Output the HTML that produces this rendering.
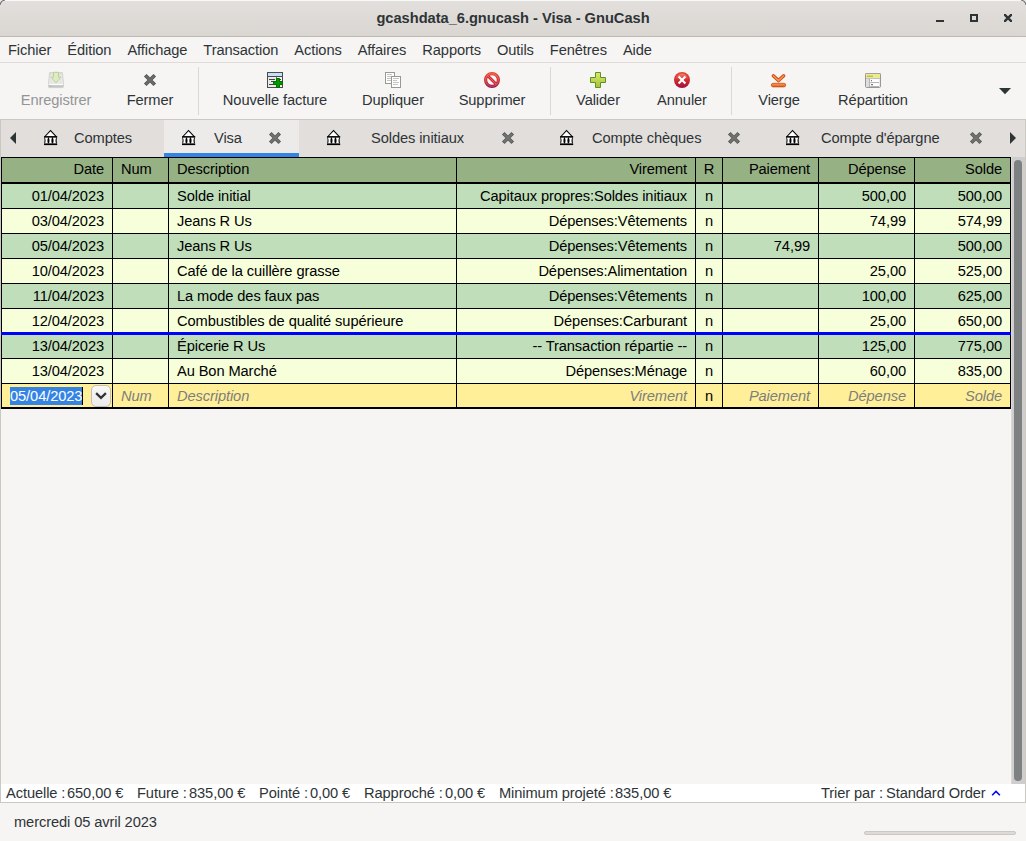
<!DOCTYPE html>
<html><head><meta charset="utf-8"><title>GnuCash</title>
<style>
html,body{margin:0;padding:0;}
body{width:1026px;height:841px;overflow:hidden;background:#f6f5f4;font-family:"Liberation Sans",sans-serif;font-size:14.667px;color:#2e3436;letter-spacing:-0.1px;position:relative;}
div,span{box-sizing:border-box;}
.abs{position:absolute;}
#title{position:absolute;left:0;top:0;width:1026px;height:37px;background:linear-gradient(to bottom,#e2dfdc 0,#dad6d2 100%);border-bottom:1px solid #bfb8b1;border-top:1px solid #f8f8f7;border-radius:6px 6px 0 0;}
#titletext{position:absolute;left:0;top:0;width:1026px;text-align:center;font-weight:bold;line-height:36px;letter-spacing:-0.03px;white-space:pre;}
#menu{position:absolute;left:0;top:37px;width:1026px;height:26px;border-bottom:1px solid #dedbd8;white-space:nowrap;}
#menu span{display:inline-block;padding:0 8px;line-height:27px;}
#toolbar{position:absolute;left:0;top:63px;width:1026px;height:56px;}
.tb{position:absolute;top:92px;transform:translateX(-50%);white-space:pre;line-height:16px;}
.sep{position:absolute;top:67px;width:1px;height:48px;background:#dbd8d5;}
.dis{color:#929595;}
#nb{position:absolute;left:0;top:119px;width:1026px;height:684px;border:1px solid #cdc7c2;background:#f6f5f4;}
#tabs{position:absolute;left:1px;top:120px;width:1024px;height:37px;background:#e1dedb;}
.tabl{position:absolute;top:130px;line-height:16px;white-space:pre;}
#acttab{position:absolute;left:164px;top:120px;width:135px;height:37px;background:#edebe9;box-shadow:inset 0 -4px #3584e4;}
#tbl{position:absolute;left:1px;top:157px;width:1010px;height:252px;background:#000;}
.rowbg{position:absolute;left:2px;width:1008px;}
.c{position:absolute;white-space:pre;overflow:hidden;color:#000;}
.c.ar{text-align:right;padding-right:8px;}
.c.al{padding-left:8px;}
.c.ac{text-align:center;}
.c.ph{color:#7c7e7c;font-style:italic;}
.c.hd{line-height:22px !important;}
.c.ph.ac{color:#000;font-style:normal;}
.vl{position:absolute;top:157px;width:1px;height:252px;background:#000;}
.hl{position:absolute;left:1px;width:1010px;height:1px;background:#000;}
#summary{position:absolute;left:1px;top:784px;width:1024px;height:18px;background:#fff;}
.sm{position:absolute;top:785px;line-height:16px;white-space:pre;}
#status{position:absolute;left:14px;top:814px;line-height:16px;white-space:pre;}
#prog{position:absolute;left:864px;top:831px;width:152px;height:4px;border:1px solid #cdc7c2;background:#dedad7;border-radius:3px;}
#trough{position:absolute;left:1011px;top:157px;width:14px;height:627px;background:#cfcecd;border-left:1px solid #dcdad7;}
#slider{position:absolute;left:1014px;top:160px;width:8px;height:621px;border-radius:4px;background:#7e8182;}
svg{position:absolute;overflow:visible;}
</style></head><body>
<div class="abs" style="left:0;top:0;width:1026px;height:8px;background:#e9e9e8"></div>
<div id="title"></div>
<svg style="left:0;top:0" width="1026" height="7" viewBox="0 0 1026 7"><path d="M0 5 Q0.800 0.800 5 0" fill="none" stroke="#6e6e6e" stroke-width="1.100"/><path d="M1026 5 Q1025.200 0.800 1021 0" fill="none" stroke="#6e6e6e" stroke-width="1.100"/></svg>
<div id="titletext">gcashdata_6.gnucash - Visa - GnuCash</div>
<svg style="left:930px;top:8px" width="90" height="22" viewBox="930 8 90 22">
 <rect x="936" y="20" width="8" height="2" fill="#2e3436"/>
 <rect x="971" y="15" width="6" height="6" fill="none" stroke="#2e3436" stroke-width="2"/>
 <clipPath id="cpx"><rect x="1004" y="14" width="8" height="8"/></clipPath><path clip-path="url(#cpx)" d="M1003 13 L1013 23 M1013 13 L1003 23" stroke="#2e3436" stroke-width="2.4" fill="none"/>
</svg>
<div id="menu"><span>Fichier</span><span>Édition</span><span>Affichage</span><span>Transaction</span><span>Actions</span><span>Affaires</span><span>Rapports</span><span>Outils</span><span>Fenêtres</span><span>Aide</span></div>
<div id="toolbar"></div>
<div class="tb dis" style="left:56px">Enregistrer</div>
<div class="tb" style="left:150px">Fermer</div>
<div class="sep" style="left:198px"></div>
<div class="tb" style="left:275px">Nouvelle facture</div>
<div class="tb" style="left:393px">Dupliquer</div>
<div class="tb" style="left:492px">Supprimer</div>
<div class="sep" style="left:550px"></div>
<div class="tb" style="left:598px">Valider</div>
<div class="tb" style="left:682px">Annuler</div>
<div class="sep" style="left:731px"></div>
<div class="tb" style="left:779px">Vierge</div>
<div class="tb" style="left:873px">Répartition</div>
<svg style="left:999px;top:88px" width="12" height="7" viewBox="0 0 12 7"><path d="M0 0 L12 0 L6 6.300 Z" fill="#2e3436"/></svg>
<svg style="left:0;top:63px" width="1026" height="56" viewBox="0 63 1026 56">
<defs>
<linearGradient id="gred" x1="0" y1="0" x2="0" y2="1"><stop offset="0" stop-color="#e8452a"/><stop offset="0.55" stop-color="#d02a2f"/><stop offset="1" stop-color="#9c0f45"/></linearGradient>
<linearGradient id="ggrn" x1="0" y1="0" x2="0" y2="1"><stop offset="0" stop-color="#dbe96a"/><stop offset="1" stop-color="#a3c23c"/></linearGradient>
<linearGradient id="gor" x1="0" y1="0" x2="0" y2="1"><stop offset="0" stop-color="#f4a45c"/><stop offset="1" stop-color="#e2571a"/></linearGradient>
<linearGradient id="ghl" x1="0" y1="0" x2="0" y2="1"><stop offset="0" stop-color="#fff" stop-opacity="0.350"/><stop offset="0.500" stop-color="#fff" stop-opacity="0"/></linearGradient>
</defs>
<!-- save (disabled) -->
<g opacity="0.92">
<path d="M49.600 72.500 L62.400 72.500 L63.500 83.500 L63.500 86.500 Q63.500 87.600 62.400 87.600 L49.600 87.600 Q48.500 87.600 48.500 86.500 L48.500 83.500 Z" fill="#e6e6e5" stroke="#d3d3d2" stroke-width="1"/>
<rect x="50.300" y="73.300" width="1.700" height="4.400" fill="#f4f4f4" stroke="#cfcfce" stroke-width="0.500"/>
<rect x="60" y="73.300" width="1.700" height="4.400" fill="#f4f4f4" stroke="#cfcfce" stroke-width="0.500"/>
<path d="M48.600 85.100 L63.400 85.100 L63.400 86.500 Q63.400 87.500 62.400 87.500 L49.600 87.500 Q48.600 87.500 48.600 86.500 Z" fill="#c3c3c2"/>
<rect x="49.500" y="85.600" width="2" height="0.900" fill="#a9a9a8"/>
<rect x="49" y="83.900" width="14" height="1.200" fill="#fcfcfc"/>
<path d="M53.500 72.300 L58.500 72.300 L58.500 77.200 L61 77.200 L56 82.800 L51 77.200 L53.500 77.200 Z" fill="#dfebc0" stroke="#b0d38e" stroke-width="1"/>
</g>
<!-- close -->
<path d="M145.250 75.250 L154.750 84.750 M154.750 75.250 L145.250 84.750" stroke="#555753" stroke-width="3.700" fill="none"/><path d="M145.900 75.900 L154.100 84.100 M154.100 75.900 L145.900 84.100" stroke="#6c6e6a" stroke-width="2" fill="none"/>
<!-- new invoice -->
<rect x="267.5" y="72.5" width="15" height="15" fill="#e9e9e7" stroke="#4b4b4b" stroke-width="1"/>
<rect x="268" y="73" width="14" height="3" fill="#c6dff6"/>
<rect x="268" y="76" width="14" height="1" fill="#4b4b4b"/>
<rect x="276" y="77" width="1" height="10" fill="#777"/>
<rect x="277" y="77" width="5" height="10" fill="#f4f4f3"/>
<rect x="269" y="79" width="6" height="1" fill="#444"/>
<rect x="271" y="81" width="4" height="1" fill="#444"/>
<rect x="269" y="84" width="6" height="1" fill="#444"/>
<rect x="279" y="79" width="2" height="1" fill="#444"/>
<path d="M276.5 78.5 L279.5 78.5 L279.5 81.5 L282.5 81.5 L282.5 84.5 L279.5 84.5 L279.5 87.5 L276.5 87.5 L276.5 84.5 L273.5 84.5 L273.5 81.5 L276.5 81.5 Z" fill="#009a00" stroke="#006c00" stroke-width="1"/>
<!-- duplicate -->
<rect x="385.5" y="72.5" width="9" height="11" fill="#fff" stroke="#979994" stroke-width="1"/>
<rect x="387" y="74" width="5" height="1" fill="#c4c5c2"/><rect x="387" y="76" width="5" height="1" fill="#c4c5c2"/><rect x="387" y="78" width="5" height="1" fill="#c4c5c2"/><rect x="387" y="80" width="5" height="1" fill="#c4c5c2"/>
<rect x="391.5" y="76.500" width="9" height="11" fill="#fff" stroke="#979994" stroke-width="1"/>
<rect x="393" y="78" width="6" height="1" fill="#c4c5c2"/><rect x="393" y="80" width="4" height="1" fill="#c4c5c2"/><rect x="393" y="82" width="6" height="1" fill="#c4c5c2"/><rect x="393" y="84" width="5" height="1" fill="#c4c5c2"/>
<!-- delete -->
<circle cx="492" cy="80" r="6.400" fill="#fdf6f5" stroke="url(#gred)" stroke-width="3.200"/>
<path d="M487.700 75.700 L496.300 84.300" stroke="#cf2a33" stroke-width="3"/>
<path d="M487.700 75.700 L496.300 84.300" stroke="#e4605d" stroke-width="1"/>
<circle cx="492" cy="80" r="6.400" fill="none" stroke="#ffffff" stroke-opacity="0.220" stroke-width="1.200"/>
<!-- validate plus -->
<path d="M595.5 72.500 L600.5 72.500 L600.5 77.500 L605.5 77.500 L605.5 82.500 L600.5 82.500 L600.5 87.500 L595.5 87.500 L595.5 82.500 L590.5 82.500 L590.5 77.500 L595.5 77.500 Z" fill="url(#ggrn)" stroke="#5d9220" stroke-width="1" stroke-linejoin="round"/>
<!-- cancel -->
<circle cx="682" cy="80" r="8" fill="url(#gred)"/>
<circle cx="682" cy="80" r="6.500" fill="url(#ghl)"/>
<path d="M678.600 76.600 L685.400 83.400 M685.400 76.600 L678.600 83.400" stroke="#fff" stroke-width="2.100"/>
<!-- go-bottom -->
<path d="M773.3 75.8 L778.5 80.600 L783.7 75.800" fill="none" stroke="#cf4a12" stroke-width="3.4" stroke-linecap="round" stroke-linejoin="round"/>
<path d="M773.3 75.800 L778.5 80.600 L783.7 75.800" fill="none" stroke="#f29550" stroke-width="1.5" stroke-linecap="round" stroke-linejoin="round"/>
<rect x="771.300" y="83.300" width="14.400" height="3.600" rx="1.8" fill="url(#gor)" stroke="#cf4a12" stroke-width="0.8"/>
<!-- split -->
<rect x="865.500" y="73.500" width="15" height="14" rx="1.200" fill="#ebebea" stroke="#989696" stroke-width="1"/>
<rect x="865.500" y="73" width="15" height="1" fill="#a3a1a1"/>
<rect x="866" y="74" width="14" height="4" fill="#ecec8a"/>
<rect x="867" y="75.600" width="6" height="1.400" fill="#bcbc66"/>
<rect x="866" y="78" width="14" height="0.800" fill="#b9b7b7"/>
<rect x="866" y="79" width="3.200" height="8" fill="#dddddc"/>
<rect x="869.200" y="79" width="0.800" height="8" fill="#aaa8a8"/>
<rect x="870.300" y="79.300" width="8.700" height="2.700" fill="#fff"/>
<rect x="870.300" y="82" width="8.700" height="0.800" fill="#a9a7a7"/>
<rect x="870.300" y="83.300" width="8.700" height="2.700" fill="#fff"/>
<rect x="870.300" y="86" width="8.700" height="0.800" fill="#a9a7a7"/>
<rect x="871" y="80.200" width="1" height="1" fill="#555"/><rect x="871" y="84.200" width="2" height="1" fill="#555"/>
</svg>
<div id="nb"></div>
<div id="tabs"></div>
<div id="acttab"></div>
<svg style="left:9px;top:132px" width="8" height="12" viewBox="0 0 8 12"><path d="M7 0 L7 12 L1 6 Z" fill="#2e3436"/></svg>
<svg style="left:1010px;top:132px" width="8" height="12" viewBox="0 0 8 12"><path d="M0 0 L0 12 L6 6 Z" fill="#2e3436"/></svg>
<div class="tabl" style="left:74px">Comptes</div>
<div class="tabl" style="left:214px">Visa</div>
<div class="tabl" style="left:371px">Soldes initiaux</div>
<div class="tabl" style="left:592px">Compte chèques</div>
<div class="tabl" style="left:821px">Compte d'épargne</div>
<svg style="left:0;top:120px" width="1026" height="37" viewBox="0 120 1026 37">
<g transform="translate(44,130)">
<path d="M6.500 -0.300 L13.300 6.900 L-0.100 6.900 Z" fill="#000"/>
<path d="M6.500 1.300 L11.200 6.250 L1.800 6.250 Z" fill="#fff"/>
<rect x="0" y="6.300" width="13.200" height="1.400" fill="#000"/>
<path d="M0.300 7.600 L12.900 7.600 Q12.300 10.500 12.900 13.600 L0.300 13.600 Q0.900 10.500 0.300 7.600 Z" fill="#000"/>
<path d="M0.900 7.700 L4.100 7.700 C3.200 8.700 3.200 12.500 4.100 13.500 L0.900 13.500 C1.800 12.500 1.800 8.700 0.900 7.700 Z" fill="#fff"/>
<path d="M4.850 7.700 L8.050 7.700 C7.150 8.700 7.150 12.500 8.050 13.500 L4.850 13.500 C5.750 12.500 5.750 8.700 4.850 7.700 Z" fill="#fff"/>
<path d="M8.900 7.700 L12.200 7.700 C11.300 8.700 11.300 12.500 12.200 13.500 L8.900 13.500 C9.800 12.500 9.800 8.700 8.900 7.700 Z" fill="#fff"/>
<rect x="0" y="13.500" width="13.200" height="1.600" fill="#000"/>
</g>
<g transform="translate(182,130)">
<path d="M6.500 -0.300 L13.300 6.900 L-0.100 6.900 Z" fill="#000"/>
<path d="M6.500 1.300 L11.200 6.250 L1.800 6.250 Z" fill="#fff"/>
<rect x="0" y="6.300" width="13.200" height="1.400" fill="#000"/>
<path d="M0.300 7.600 L12.900 7.600 Q12.300 10.500 12.900 13.600 L0.300 13.600 Q0.900 10.500 0.300 7.600 Z" fill="#000"/>
<path d="M0.900 7.700 L4.100 7.700 C3.200 8.700 3.200 12.500 4.100 13.500 L0.900 13.500 C1.800 12.500 1.800 8.700 0.900 7.700 Z" fill="#fff"/>
<path d="M4.850 7.700 L8.050 7.700 C7.150 8.700 7.150 12.500 8.050 13.500 L4.850 13.500 C5.750 12.500 5.750 8.700 4.850 7.700 Z" fill="#fff"/>
<path d="M8.900 7.700 L12.200 7.700 C11.300 8.700 11.300 12.500 12.200 13.500 L8.900 13.500 C9.800 12.500 9.800 8.700 8.900 7.700 Z" fill="#fff"/>
<rect x="0" y="13.500" width="13.200" height="1.600" fill="#000"/>
</g>
<g transform="translate(327,130)">
<path d="M6.500 -0.300 L13.300 6.900 L-0.100 6.900 Z" fill="#000"/>
<path d="M6.500 1.300 L11.200 6.250 L1.800 6.250 Z" fill="#fff"/>
<rect x="0" y="6.300" width="13.200" height="1.400" fill="#000"/>
<path d="M0.300 7.600 L12.900 7.600 Q12.300 10.500 12.900 13.600 L0.300 13.600 Q0.900 10.500 0.300 7.600 Z" fill="#000"/>
<path d="M0.900 7.700 L4.100 7.700 C3.200 8.700 3.200 12.500 4.100 13.500 L0.900 13.500 C1.800 12.500 1.800 8.700 0.900 7.700 Z" fill="#fff"/>
<path d="M4.850 7.700 L8.050 7.700 C7.150 8.700 7.150 12.500 8.050 13.500 L4.850 13.500 C5.750 12.500 5.750 8.700 4.850 7.700 Z" fill="#fff"/>
<path d="M8.900 7.700 L12.200 7.700 C11.300 8.700 11.300 12.500 12.200 13.500 L8.900 13.500 C9.800 12.500 9.800 8.700 8.900 7.700 Z" fill="#fff"/>
<rect x="0" y="13.500" width="13.200" height="1.600" fill="#000"/>
</g>
<g transform="translate(560,130)">
<path d="M6.500 -0.300 L13.300 6.900 L-0.100 6.900 Z" fill="#000"/>
<path d="M6.500 1.300 L11.200 6.250 L1.800 6.250 Z" fill="#fff"/>
<rect x="0" y="6.300" width="13.200" height="1.400" fill="#000"/>
<path d="M0.300 7.600 L12.900 7.600 Q12.300 10.500 12.900 13.600 L0.300 13.600 Q0.900 10.500 0.300 7.600 Z" fill="#000"/>
<path d="M0.900 7.700 L4.100 7.700 C3.200 8.700 3.200 12.500 4.100 13.500 L0.900 13.500 C1.800 12.500 1.800 8.700 0.900 7.700 Z" fill="#fff"/>
<path d="M4.850 7.700 L8.050 7.700 C7.150 8.700 7.150 12.500 8.050 13.500 L4.850 13.500 C5.750 12.500 5.750 8.700 4.850 7.700 Z" fill="#fff"/>
<path d="M8.900 7.700 L12.200 7.700 C11.300 8.700 11.300 12.500 12.200 13.500 L8.900 13.500 C9.800 12.500 9.800 8.700 8.900 7.700 Z" fill="#fff"/>
<rect x="0" y="13.500" width="13.200" height="1.600" fill="#000"/>
</g>
<g transform="translate(786,130)">
<path d="M6.500 -0.300 L13.300 6.900 L-0.100 6.900 Z" fill="#000"/>
<path d="M6.500 1.300 L11.200 6.250 L1.800 6.250 Z" fill="#fff"/>
<rect x="0" y="6.300" width="13.200" height="1.400" fill="#000"/>
<path d="M0.300 7.600 L12.900 7.600 Q12.300 10.500 12.900 13.600 L0.300 13.600 Q0.900 10.500 0.300 7.600 Z" fill="#000"/>
<path d="M0.900 7.700 L4.100 7.700 C3.200 8.700 3.200 12.500 4.100 13.500 L0.900 13.500 C1.800 12.500 1.800 8.700 0.900 7.700 Z" fill="#fff"/>
<path d="M4.850 7.700 L8.050 7.700 C7.150 8.700 7.150 12.500 8.050 13.500 L4.850 13.500 C5.750 12.500 5.750 8.700 4.850 7.700 Z" fill="#fff"/>
<path d="M8.900 7.700 L12.200 7.700 C11.300 8.700 11.300 12.500 12.200 13.500 L8.900 13.500 C9.800 12.500 9.800 8.700 8.900 7.700 Z" fill="#fff"/>
<rect x="0" y="13.500" width="13.200" height="1.600" fill="#000"/>
</g>
<g transform="translate(269,132)"><path d="M1.250 1.250 L10.750 10.750 M10.750 1.250 L1.250 10.750" stroke="#5a5c59" stroke-width="3.700" fill="none"/><path d="M1.900 1.900 L10.100 10.100 M10.100 1.900 L1.900 10.100" stroke="#727471" stroke-width="2" fill="none"/></g>
<g transform="translate(502,132)"><path d="M1.250 1.250 L10.750 10.750 M10.750 1.250 L1.250 10.750" stroke="#5a5c59" stroke-width="3.700" fill="none"/><path d="M1.900 1.900 L10.100 10.100 M10.100 1.900 L1.900 10.100" stroke="#727471" stroke-width="2" fill="none"/></g>
<g transform="translate(728,132)"><path d="M1.250 1.250 L10.750 10.750 M10.750 1.250 L1.250 10.750" stroke="#5a5c59" stroke-width="3.700" fill="none"/><path d="M1.900 1.900 L10.100 10.100 M10.100 1.900 L1.900 10.100" stroke="#727471" stroke-width="2" fill="none"/></g>
<g transform="translate(970,132)"><path d="M1.250 1.250 L10.750 10.750 M10.750 1.250 L1.250 10.750" stroke="#5a5c59" stroke-width="3.700" fill="none"/><path d="M1.900 1.900 L10.100 10.100 M10.100 1.900 L1.900 10.100" stroke="#727471" stroke-width="2" fill="none"/></g>
</svg>
<div id="tbl"></div>
<div class="c ar hd" style="left:2px;top:158px;width:110px;height:24px;line-height:24px;background:#96b183">Date</div>
<div class="c al hd" style="left:113px;top:158px;width:55px;height:24px;line-height:24px;background:#96b183">Num</div>
<div class="c al hd" style="left:169px;top:158px;width:287px;height:24px;line-height:24px;background:#96b183">Description</div>
<div class="c ar hd" style="left:457px;top:158px;width:238px;height:24px;line-height:24px;background:#96b183">Virement</div>
<div class="c ac hd" style="left:696px;top:158px;width:26px;height:24px;line-height:24px;background:#96b183">R</div>
<div class="c ar hd" style="left:723px;top:158px;width:95px;height:24px;line-height:24px;background:#96b183">Paiement</div>
<div class="c ar hd" style="left:819px;top:158px;width:95px;height:24px;line-height:24px;background:#96b183">Dépense</div>
<div class="c ar hd" style="left:915px;top:158px;width:95px;height:24px;line-height:24px;background:#96b183">Solde</div>
<div class="c ar " style="left:2px;top:184px;width:110px;height:24px;line-height:24px;background:#bfdeb9">01/04/2023</div>
<div class="c al " style="left:113px;top:184px;width:55px;height:24px;line-height:24px;background:#bfdeb9"></div>
<div class="c al " style="left:169px;top:184px;width:287px;height:24px;line-height:24px;background:#bfdeb9">Solde initial</div>
<div class="c ar " style="left:457px;top:184px;width:238px;height:24px;line-height:24px;background:#bfdeb9">Capitaux propres:Soldes initiaux</div>
<div class="c ac " style="left:696px;top:184px;width:26px;height:24px;line-height:24px;background:#bfdeb9">n</div>
<div class="c ar " style="left:723px;top:184px;width:95px;height:24px;line-height:24px;background:#bfdeb9"></div>
<div class="c ar " style="left:819px;top:184px;width:95px;height:24px;line-height:24px;background:#bfdeb9">500,00</div>
<div class="c ar " style="left:915px;top:184px;width:95px;height:24px;line-height:24px;background:#bfdeb9">500,00</div>
<div class="c ar " style="left:2px;top:209px;width:110px;height:24px;line-height:24px;background:#f6ffda">03/04/2023</div>
<div class="c al " style="left:113px;top:209px;width:55px;height:24px;line-height:24px;background:#f6ffda"></div>
<div class="c al " style="left:169px;top:209px;width:287px;height:24px;line-height:24px;background:#f6ffda">Jeans R Us</div>
<div class="c ar " style="left:457px;top:209px;width:238px;height:24px;line-height:24px;background:#f6ffda">Dépenses:Vêtements</div>
<div class="c ac " style="left:696px;top:209px;width:26px;height:24px;line-height:24px;background:#f6ffda">n</div>
<div class="c ar " style="left:723px;top:209px;width:95px;height:24px;line-height:24px;background:#f6ffda"></div>
<div class="c ar " style="left:819px;top:209px;width:95px;height:24px;line-height:24px;background:#f6ffda">74,99</div>
<div class="c ar " style="left:915px;top:209px;width:95px;height:24px;line-height:24px;background:#f6ffda">574,99</div>
<div class="c ar " style="left:2px;top:234px;width:110px;height:24px;line-height:24px;background:#bfdeb9">05/04/2023</div>
<div class="c al " style="left:113px;top:234px;width:55px;height:24px;line-height:24px;background:#bfdeb9"></div>
<div class="c al " style="left:169px;top:234px;width:287px;height:24px;line-height:24px;background:#bfdeb9">Jeans R Us</div>
<div class="c ar " style="left:457px;top:234px;width:238px;height:24px;line-height:24px;background:#bfdeb9">Dépenses:Vêtements</div>
<div class="c ac " style="left:696px;top:234px;width:26px;height:24px;line-height:24px;background:#bfdeb9">n</div>
<div class="c ar " style="left:723px;top:234px;width:95px;height:24px;line-height:24px;background:#bfdeb9">74,99</div>
<div class="c ar " style="left:819px;top:234px;width:95px;height:24px;line-height:24px;background:#bfdeb9"></div>
<div class="c ar " style="left:915px;top:234px;width:95px;height:24px;line-height:24px;background:#bfdeb9">500,00</div>
<div class="c ar " style="left:2px;top:259px;width:110px;height:24px;line-height:24px;background:#f6ffda">10/04/2023</div>
<div class="c al " style="left:113px;top:259px;width:55px;height:24px;line-height:24px;background:#f6ffda"></div>
<div class="c al " style="left:169px;top:259px;width:287px;height:24px;line-height:24px;background:#f6ffda">Café de la cuillère grasse</div>
<div class="c ar " style="left:457px;top:259px;width:238px;height:24px;line-height:24px;background:#f6ffda">Dépenses:Alimentation</div>
<div class="c ac " style="left:696px;top:259px;width:26px;height:24px;line-height:24px;background:#f6ffda">n</div>
<div class="c ar " style="left:723px;top:259px;width:95px;height:24px;line-height:24px;background:#f6ffda"></div>
<div class="c ar " style="left:819px;top:259px;width:95px;height:24px;line-height:24px;background:#f6ffda">25,00</div>
<div class="c ar " style="left:915px;top:259px;width:95px;height:24px;line-height:24px;background:#f6ffda">525,00</div>
<div class="c ar " style="left:2px;top:284px;width:110px;height:24px;line-height:24px;background:#bfdeb9">11/04/2023</div>
<div class="c al " style="left:113px;top:284px;width:55px;height:24px;line-height:24px;background:#bfdeb9"></div>
<div class="c al " style="left:169px;top:284px;width:287px;height:24px;line-height:24px;background:#bfdeb9">La mode des faux pas</div>
<div class="c ar " style="left:457px;top:284px;width:238px;height:24px;line-height:24px;background:#bfdeb9">Dépenses:Vêtements</div>
<div class="c ac " style="left:696px;top:284px;width:26px;height:24px;line-height:24px;background:#bfdeb9">n</div>
<div class="c ar " style="left:723px;top:284px;width:95px;height:24px;line-height:24px;background:#bfdeb9"></div>
<div class="c ar " style="left:819px;top:284px;width:95px;height:24px;line-height:24px;background:#bfdeb9">100,00</div>
<div class="c ar " style="left:915px;top:284px;width:95px;height:24px;line-height:24px;background:#bfdeb9">625,00</div>
<div class="c ar " style="left:2px;top:309px;width:110px;height:24px;line-height:24px;background:#f6ffda">12/04/2023</div>
<div class="c al " style="left:113px;top:309px;width:55px;height:24px;line-height:24px;background:#f6ffda"></div>
<div class="c al " style="left:169px;top:309px;width:287px;height:24px;line-height:24px;background:#f6ffda">Combustibles de qualité supérieure</div>
<div class="c ar " style="left:457px;top:309px;width:238px;height:24px;line-height:24px;background:#f6ffda">Dépenses:Carburant</div>
<div class="c ac " style="left:696px;top:309px;width:26px;height:24px;line-height:24px;background:#f6ffda">n</div>
<div class="c ar " style="left:723px;top:309px;width:95px;height:24px;line-height:24px;background:#f6ffda"></div>
<div class="c ar " style="left:819px;top:309px;width:95px;height:24px;line-height:24px;background:#f6ffda">25,00</div>
<div class="c ar " style="left:915px;top:309px;width:95px;height:24px;line-height:24px;background:#f6ffda">650,00</div>
<div class="c ar " style="left:2px;top:334px;width:110px;height:24px;line-height:24px;background:#bfdeb9">13/04/2023</div>
<div class="c al " style="left:113px;top:334px;width:55px;height:24px;line-height:24px;background:#bfdeb9"></div>
<div class="c al " style="left:169px;top:334px;width:287px;height:24px;line-height:24px;background:#bfdeb9">Épicerie R Us</div>
<div class="c ar " style="left:457px;top:334px;width:238px;height:24px;line-height:24px;background:#bfdeb9">-- Transaction répartie --</div>
<div class="c ac " style="left:696px;top:334px;width:26px;height:24px;line-height:24px;background:#bfdeb9">n</div>
<div class="c ar " style="left:723px;top:334px;width:95px;height:24px;line-height:24px;background:#bfdeb9"></div>
<div class="c ar " style="left:819px;top:334px;width:95px;height:24px;line-height:24px;background:#bfdeb9">125,00</div>
<div class="c ar " style="left:915px;top:334px;width:95px;height:24px;line-height:24px;background:#bfdeb9">775,00</div>
<div class="c ar " style="left:2px;top:359px;width:110px;height:24px;line-height:24px;background:#f6ffda">13/04/2023</div>
<div class="c al " style="left:113px;top:359px;width:55px;height:24px;line-height:24px;background:#f6ffda"></div>
<div class="c al " style="left:169px;top:359px;width:287px;height:24px;line-height:24px;background:#f6ffda">Au Bon Marché</div>
<div class="c ar " style="left:457px;top:359px;width:238px;height:24px;line-height:24px;background:#f6ffda">Dépenses:Ménage</div>
<div class="c ac " style="left:696px;top:359px;width:26px;height:24px;line-height:24px;background:#f6ffda">n</div>
<div class="c ar " style="left:723px;top:359px;width:95px;height:24px;line-height:24px;background:#f6ffda"></div>
<div class="c ar " style="left:819px;top:359px;width:95px;height:24px;line-height:24px;background:#f6ffda">60,00</div>
<div class="c ar " style="left:915px;top:359px;width:95px;height:24px;line-height:24px;background:#f6ffda">835,00</div>
<div class="c ar ph" style="left:2px;top:384px;width:110px;height:23px;line-height:24px;background:#ffef98"></div>
<div class="c al ph" style="left:113px;top:384px;width:55px;height:23px;line-height:24px;background:#ffef98">Num</div>
<div class="c al ph" style="left:169px;top:384px;width:287px;height:23px;line-height:24px;background:#ffef98">Description</div>
<div class="c ar ph" style="left:457px;top:384px;width:238px;height:23px;line-height:24px;background:#ffef98">Virement</div>
<div class="c ac ph" style="left:696px;top:384px;width:26px;height:23px;line-height:24px;background:#ffef98">n</div>
<div class="c ar ph" style="left:723px;top:384px;width:95px;height:23px;line-height:24px;background:#ffef98">Paiement</div>
<div class="c ar ph" style="left:819px;top:384px;width:95px;height:23px;line-height:24px;background:#ffef98">Dépense</div>
<div class="c ar ph" style="left:915px;top:384px;width:95px;height:23px;line-height:24px;background:#ffef98">Solde</div><div class="abs" style="left:1px;top:332px;width:1010px;height:3px;background:#0000ff"></div>
<div class="abs" style="left:10px;top:387px;width:73px;height:18px;background:#3584e4"></div>
<div class="abs" style="left:10px;top:384px;width:80px;height:23px;line-height:24px;color:#fff;white-space:pre">05/04/2023</div>
<div class="abs" style="left:82px;top:387px;width:1px;height:18px;background:#000"></div>
<div class="abs" style="left:91px;top:385px;width:20px;height:22px;border:1px solid #c4beb8;border-radius:5px;background:linear-gradient(#f8f8f7,#ecebe9)"></div>
<svg style="left:94px;top:391px" width="14" height="10" viewBox="94 391 14 10"><path d="M96.100 393.100 L101 397.900 L105.900 393.100" stroke="#2e3436" stroke-width="2.200" fill="none"/></svg>
<div id="trough"></div><div id="slider"></div>
<div id="summary"></div>
<div class="sm" style="left:6px">Actuelle :</div><div class="sm" style="left:67px">650,00 €</div>
<div class="sm" style="left:137px">Future :</div><div class="sm" style="left:189px">835,00 €</div>
<div class="sm" style="left:259px">Pointé :</div><div class="sm" style="left:310px">0,00 €</div>
<div class="sm" style="left:364px">Rapproché :</div><div class="sm" style="left:445px">0,00 €</div>
<div class="sm" style="left:499px">Minimum projeté :</div><div class="sm" style="left:615px">835,00 €</div>
<div class="sm" style="left:821px">Trier par :</div><div class="sm" style="left:886px">Standard Order</div>
<svg style="left:991px;top:789px" width="10" height="8" viewBox="0 0 10 8"><path d="M1.100 6.300 L5 2.400 L8.900 6.300" stroke="#0000ff" stroke-width="1.500" fill="none"/></svg>
<div id="status">mercredi 05 avril 2023</div>
<div id="prog"></div>
</body></html>
